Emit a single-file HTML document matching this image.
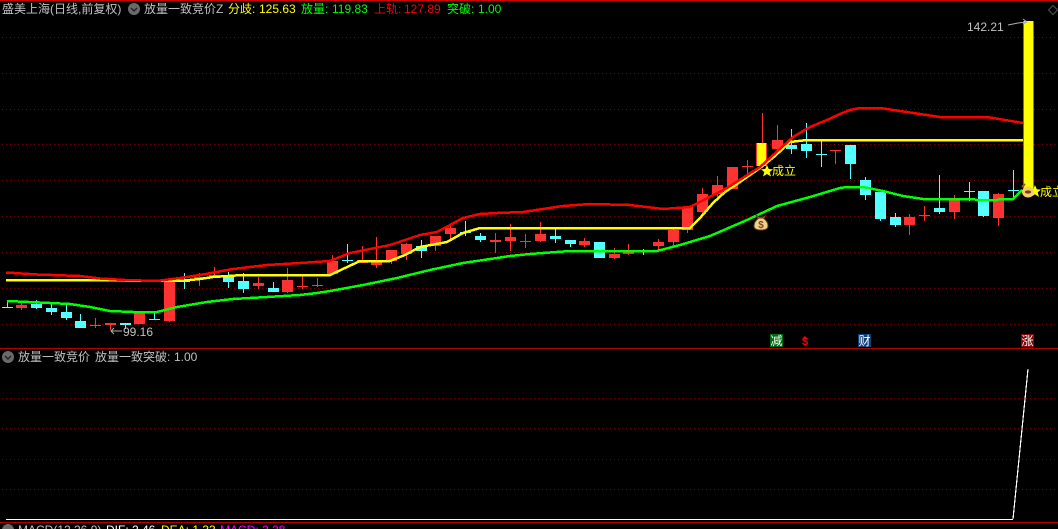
<!DOCTYPE html>
<html><head><meta charset="utf-8"><style>
html,body{margin:0;padding:0;background:#000;width:1058px;height:529px;overflow:hidden}
#w{position:relative;width:1058px;height:529px;overflow:hidden;background:#000}
svg{position:absolute;left:0;top:0}
.t{position:absolute;white-space:nowrap;font:12px/14px "WenQuanYi Zen Hei","Liberation Sans","Noto Sans CJK SC",sans-serif;color:#c0c0c0}
.n{font-family:"Liberation Sans",sans-serif}
.y{color:#ff0}.g{color:#0f0}.r{color:#f00}.m{color:#f0f}.wh{color:#fff}
.b{position:absolute;width:13px;height:13px;top:334px;color:#fff;font:12px/13px "WenQuanYi Zen Hei","Noto Sans CJK SC",sans-serif;text-align:center}
</style></head><body><div id="w">
<svg width="1058" height="529" viewBox="0 0 1058 529">
<g shape-rendering="crispEdges">
<rect x="0" y="0" width="1058" height="1" fill="#d00000"/>
<rect x="0" y="348" width="1058" height="1" fill="#b00000"/>
<rect x="0" y="522" width="1058" height="1" fill="#b00000"/>
<g stroke="#7a0000" stroke-width="1" stroke-dasharray="1 3" fill="none">
<path d="M2 37.5H1058M2 73.5H1058M2 109.5H1058M2 144.5H1058M2 180.5H1058M2 216.5H1058M2 252.5H1058M2 288.5H1058M2 324.5H1058M2 398.5H1058M2 428.5H1058M2 459.5H1058M2 489.5H1058"/>
</g>
<path fill="#ff3232" d="M21 303h1v7h-1zM16 305h11v3h-11zM95 318h1v10h-1zM90 325h11v1h-11zM110 323h1v7h-1zM105 323h11v2h-11zM134 312h11v12h-11zM169 278h1v44h-1zM164 282h11v39h-11zM199 273h1v13h-1zM194 277h11v2h-11zM214 267h1v11h-1zM209 275h11v2h-11zM258 277h1v12h-1zM253 283h11v3h-11zM287 268h1v25h-1zM282 280h11v12h-11zM302 276h1v13h-1zM297 286h11v1h-11zM317 278h1v9h-1zM312 285h11v1h-11zM332 255h1v20h-1zM327 261h11v13h-11zM362 246h1v17h-1zM357 260h11v3h-11zM376 237h1v31h-1zM371 261h11v4h-11zM391 250h1v14h-1zM386 250h11v11h-11zM406 243h1v17h-1zM401 244h11v10h-11zM435 236h1v15h-1zM430 236h11v10h-11zM450 226h1v14h-1zM445 228h11v6h-11zM495 233h1v20h-1zM490 240h11v2h-11zM510 224h1v27h-1zM505 237h11v4h-11zM525 234h1v14h-1zM520 241h11v1h-11zM540 222h1v20h-1zM535 234h11v7h-11zM584 238h1v9h-1zM579 241h11v4h-11zM614 248h1v11h-1zM609 254h11v4h-11zM628 244h1v11h-1zM623 252h11v2h-11zM658 239h1v11h-1zM653 242h11v4h-11zM673 229h1v17h-1zM668 230h11v12h-11zM687 207h1v26h-1zM682 207h11v23h-11zM702 188h1v28h-1zM697 194h11v18h-11zM717 176h1v21h-1zM712 185h11v9h-11zM732 167h1v22h-1zM727 167h11v22h-11zM747 160h1v15h-1zM742 166h11v1h-11zM762 113h1v54h-1zM777 125h1v25h-1zM772 140h11v9h-11zM835 150h1v14h-1zM830 150h11v1h-11zM909 214h1v21h-1zM904 217h11v8h-11zM924 206h1v15h-1zM919 215h11v1h-11zM954 195h1v24h-1zM949 199h11v13h-11zM998 193h1v33h-1zM993 194h11v24h-11z"/>
<path fill="#54ffff" d="M7 301h1v7h-1zM2 307h11v1h-11zM36 300h1v9h-1zM31 304h11v4h-11zM51 303h1v12h-1zM46 308h11v4h-11zM66 303h1v17h-1zM61 312h11v6h-11zM80 314h1v14h-1zM75 321h11v7h-11zM125 323h1v6h-1zM120 323h11v2h-11zM154 313h1v7h-1zM149 319h11v1h-11zM184 273h1v16h-1zM179 281h11v1h-11zM228 272h1v16h-1zM223 277h11v5h-11zM243 273h1v20h-1zM238 281h11v8h-11zM273 282h1v10h-1zM268 288h11v4h-11zM347 244h1v19h-1zM342 260h11v1h-11zM421 240h1v18h-1zM416 246h11v5h-11zM465 221h1v15h-1zM460 232h11v1h-11zM480 233h1v9h-1zM475 236h11v4h-11zM555 229h1v14h-1zM550 236h11v3h-11zM570 240h1v7h-1zM565 240h11v4h-11zM594 242h11v16h-11zM643 249h1v6h-1zM791 129h1v25h-1zM786 145h11v4h-11zM806 123h1v35h-1zM801 144h11v7h-11zM821 141h1v26h-1zM816 154h11v1h-11zM850 145h1v34h-1zM845 145h11v19h-11zM865 177h1v23h-1zM860 180h11v15h-11zM880 192h1v29h-1zM875 192h11v27h-11zM895 213h1v14h-1zM890 217h11v8h-11zM939 175h1v39h-1zM934 208h11v4h-11zM969 182h1v19h-1zM964 191h11v1h-11zM983 191h1v26h-1zM978 191h11v25h-11zM1013 170h1v29h-1zM1008 190h11v1h-11z"/>
<rect x="756" y="143" width="11" height="23" fill="#ff3232"/>
<rect x="757" y="143" width="9" height="23" fill="#ff0"/>
<polyline fill="none" stroke="#ff0" stroke-width="2.5" points="6,280 125,280.5 180,281 200,279 213,277 243,275 330,275 345,268 360,261 390,261 405,255 420,247 447,242 463,233 480,228 690,228 700,218 713,203 725,192 740,182 760,168 775,156 790,142 807,140 1023,140"/>
<polyline fill="none" stroke="#f00" stroke-width="2.5" points="6,272.5 37,274.5 80,276 100,278.5 125,280 157,281 180,278 200,275 233,269 267,265 300,263 330,261 350,253 390,245 420,235 437,232 450,225 463,218 480,214 497,213 523,212 563,206 590,204 630,205 663,209 690,207 727,188 760,167 793,137 810,127 827,120 840,114 850,110 860,108 880,108 900,111 940,117 987,117 1023,123"/>
<polyline fill="none" stroke="#0f0" stroke-width="2.5" points="7,301 50,303 70,304 90,307 110,311 133,312 157,312 177,307 207,302 233,299 267,297 300,295 317,293 330,291 363,285 397,278 430,270 463,263 497,258 510,256 530,254 570,251 657,251 680,245 710,236 747,220 777,206 810,197 840,188 847,187 863,187 883,191 903,196 923,199 973,199 977,200 997,200 1000,199 1013,199 1022,190"/>
<rect x="1023" y="21" width="11" height="172" fill="#ff3232"/>
<rect x="1024" y="21" width="9" height="172" fill="#ff0"/>
<rect x="6" y="519" width="1007" height="1" fill="#fff"/>
<polyline fill="none" stroke="#fff" stroke-width="1.2" points="1013,519 1028,369"/>
</g>
<polygon fill="#ff0" points="767,165 768.8,169 773,169.3 769.7,172 771,176.5 767,174 763,176.5 764.3,172 761,169.3 765.2,169"/>
<polygon fill="#ff0" points="1035,185 1036.8,189.3 1041,189.6 1037.7,192.2 1039,197 1035,194.2 1031,197 1032.3,192.2 1029,189.6 1033.2,189.3"/>
<g>
<path d="M756 215l3 2h4l3-2 -2 4h-6z" fill="#a9683a" stroke="#5a3018" stroke-width=".7"/>
<path d="M759 218h4c3 2 5 5 5 8 0 3-3 4-7 4s-7-1-7-4c0-3 2-6 5-8z" fill="#f2d28a" stroke="#6a4020"/>
<text x="761" y="228" text-anchor="middle" font-family="Liberation Sans" font-weight="bold" font-size="10" fill="#7a4a1c">$</text>
</g>
<ellipse cx="1028" cy="192" rx="6" ry="5.5" fill="#f5d060"/>
<ellipse cx="1028" cy="192" rx="3.2" ry="1.6" fill="#7a3a30"/>
<path d="M1022 187l3-3" stroke="#a0522d" stroke-width="2"/>
<circle cx="134" cy="9" r="6" fill="#6a6a6a"/>
<path d="M131 8l3 3 3-3" stroke="#222" stroke-width="1.4" fill="none"/>
<circle cx="8" cy="357" r="6" fill="#6a6a6a"/>
<path d="M5 356l3 3 3-3" stroke="#222" stroke-width="1.4" fill="none"/>
<circle cx="8" cy="530" r="6" fill="#6a6a6a"/>
<path d="M1053 5.5l4.5 4.5-4.5 4.5-4.5-4.5z" fill="none" stroke="#555"/>
<path d="M111 331h11M114 328l-3 3 3 3" stroke="#b0b0b0" fill="none"/>
<path d="M1008 25l10-2 9-1M1023 19l4 3-4 2" stroke="#b0b0b0" fill="none"/>
<path d="M805 336l-3 3h6z" fill="#f00"/>
</svg>
<div class="t" style="left:2px;top:2px">盛美上海(日线,前复权)</div>
<div class="t" style="left:144px;top:2px">放量一致竞价Z</div>
<div class="t y" style="left:228px;top:2px">分歧:</div><div class="t y n" style="left:259px;top:2px">125.63</div>
<div class="t g" style="left:301px;top:2px">放量:</div><div class="t g n" style="left:332px;top:2px">119.83</div>
<div class="t r" style="left:374px;top:2px">上轨:</div><div class="t r n" style="left:404px;top:2px">127.89</div>
<div class="t g" style="left:447px;top:2px">突破:</div><div class="t g n" style="left:478px;top:2px">1.00</div>
<div class="t" style="left:18px;top:350px">放量一致竞价</div>
<div class="t" style="left:95px;top:350px">放量一致突破:</div><div class="t n" style="left:174px;top:350px">1.00</div>
<div class="t n" style="left:123px;top:325px">99.16</div>
<div class="t n" style="left:967px;top:20px">142.21</div>
<div class="t y" style="left:772px;top:164px">成立</div>
<div class="t y" style="left:1040px;top:185px">成立</div>
<div class="b" style="left:770px;background:#006a10">减</div>
<div class="b" style="left:858px;background:#0f3f78">财</div>
<div class="b" style="left:1021px;background:#800808">涨</div>
<div class="t r n" style="left:802px;top:336px;font-weight:bold;font-size:11px;line-height:12px">$</div>
<div class="t n" style="left:18px;top:523px">MACD(12,26,9)</div>
<div class="t n wh" style="left:106px;top:523px">DIF: 2.46</div>
<div class="t n y" style="left:161px;top:523px">DEA: 1.33</div>
<div class="t n m" style="left:220px;top:523px">MACD: 2.28</div>
</div></body></html>
